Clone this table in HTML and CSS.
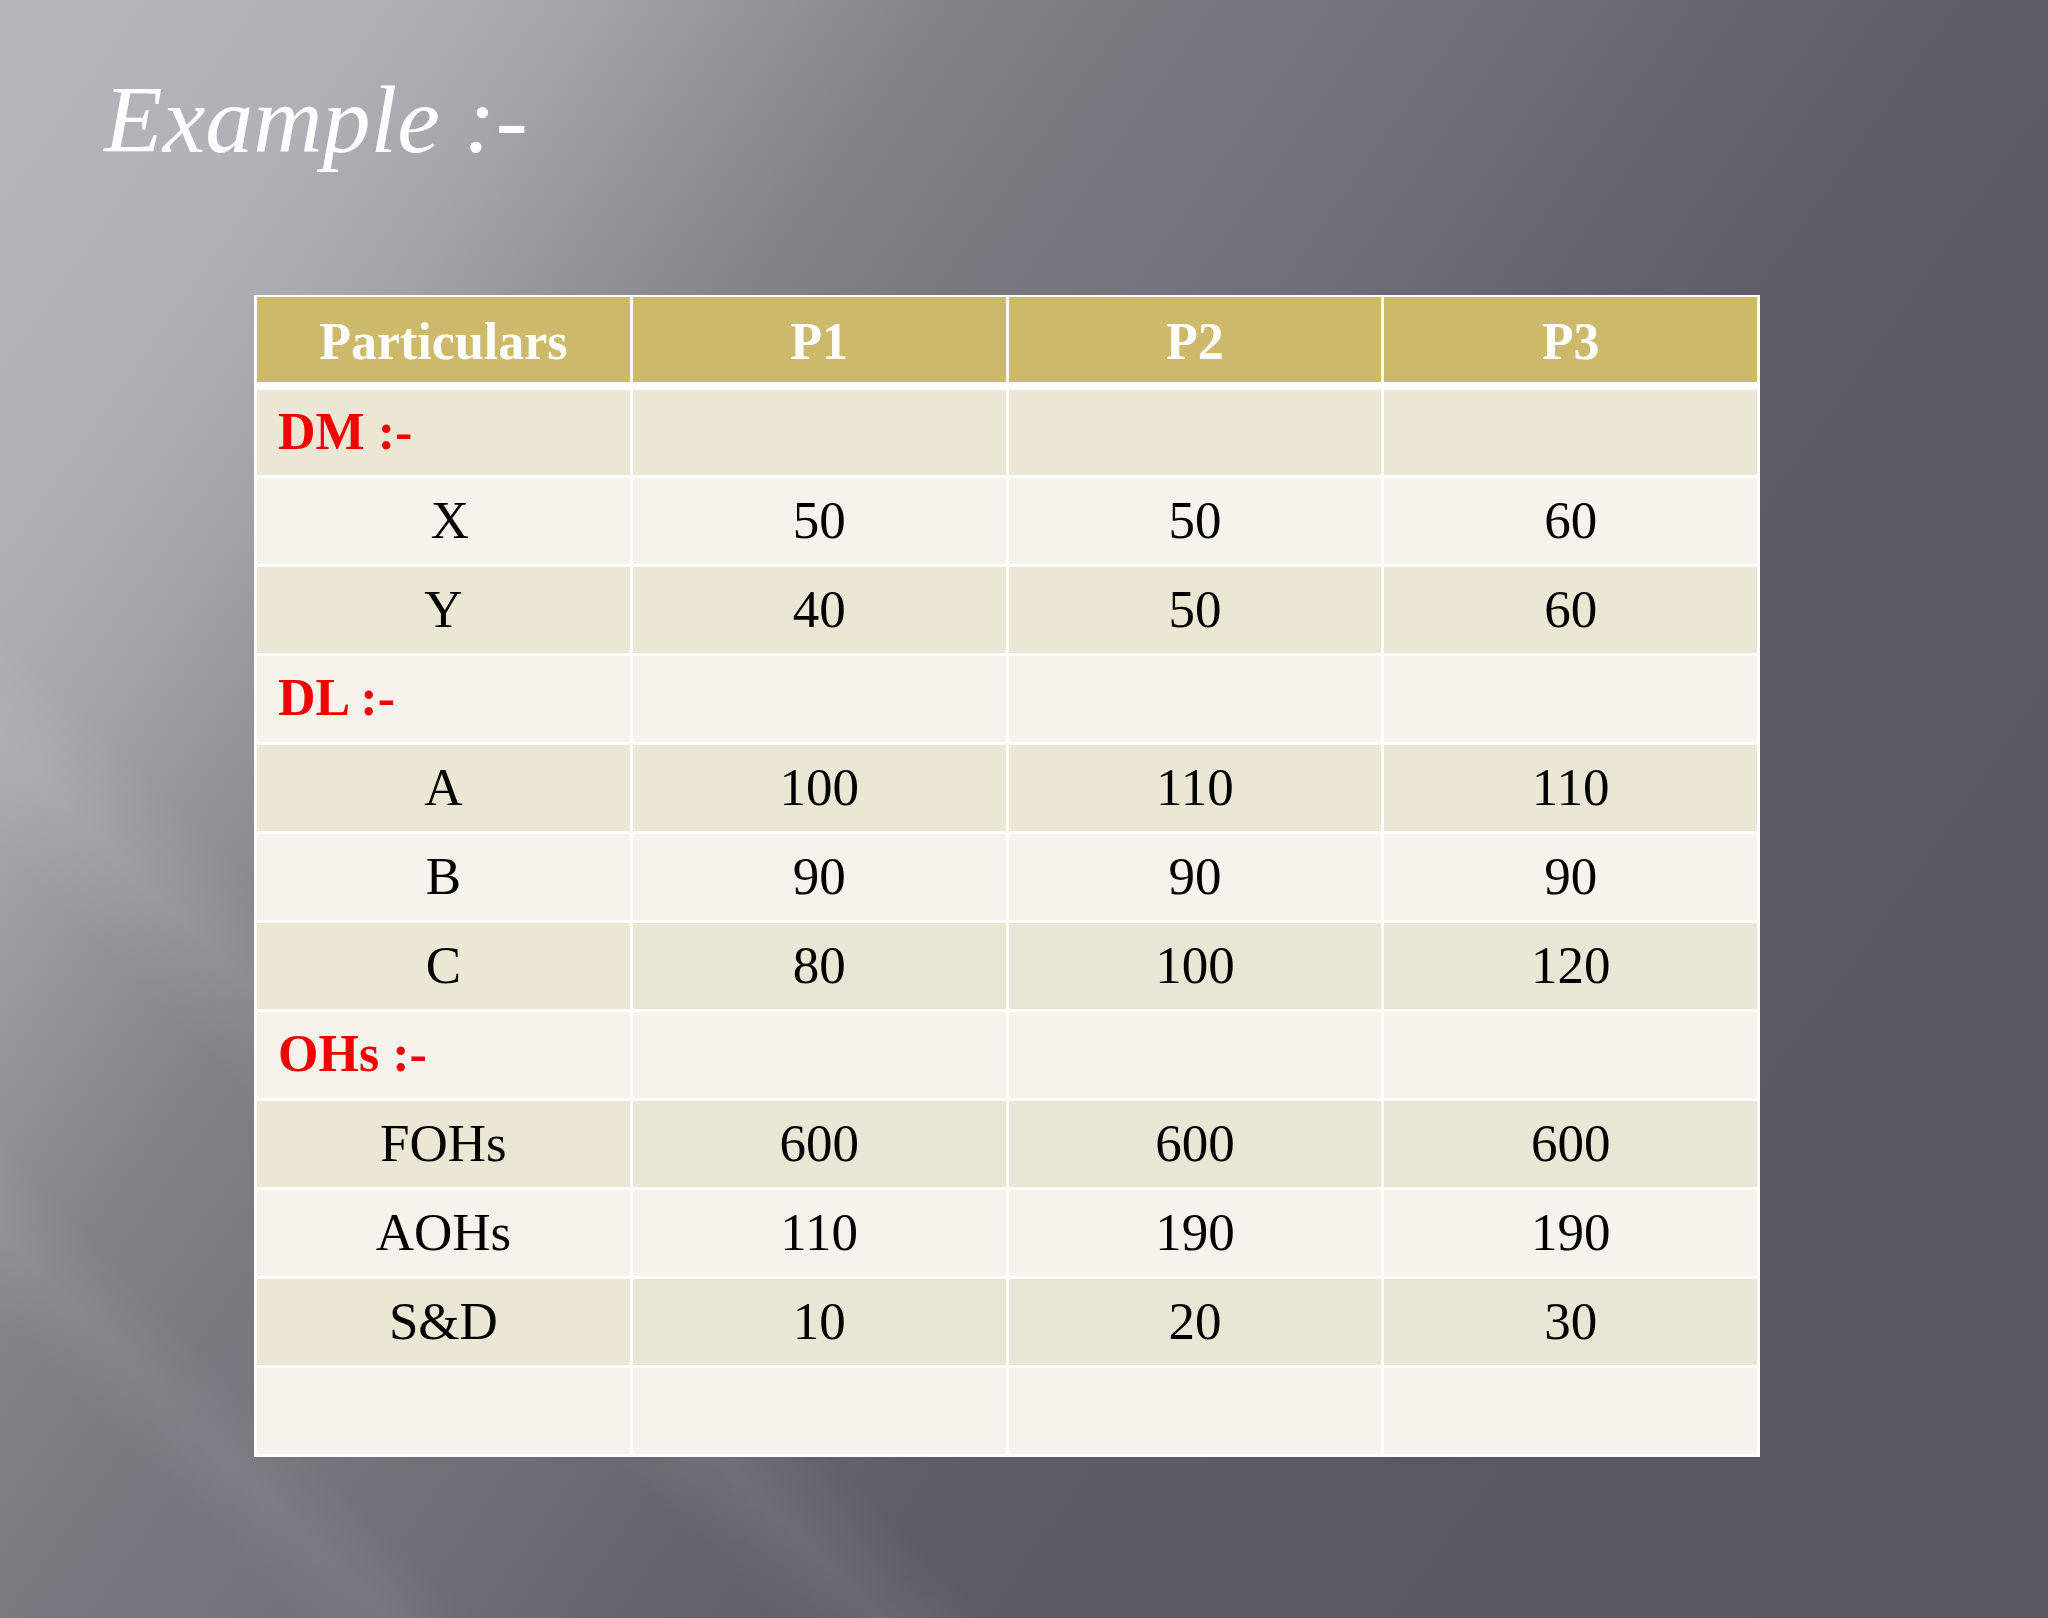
FILE: index.html
```html
<!DOCTYPE html>
<html>
<head>
<meta charset="utf-8">
<link rel="stylesheet" href="styles.css">
</head>
<body>
<div class="slide">
  <h1 class="title">Example :-</h1>
  <div class="table">
    <div class="row head">
      <div class="cell">Particulars</div><div class="cell">P1</div><div class="cell">P2</div><div class="cell">P3</div>
    </div>
    <div class="row first dark">
      <div class="cell sec">DM :-</div><div class="cell"></div><div class="cell"></div><div class="cell"></div>
    </div>
    <div class="row light">
      <div class="cell">&nbsp;X</div><div class="cell">50</div><div class="cell">50</div><div class="cell">60</div>
    </div>
    <div class="row dark">
      <div class="cell">Y</div><div class="cell">40</div><div class="cell">50</div><div class="cell">60</div>
    </div>
    <div class="row light">
      <div class="cell sec">DL :-</div><div class="cell"></div><div class="cell"></div><div class="cell"></div>
    </div>
    <div class="row dark">
      <div class="cell">A</div><div class="cell">100</div><div class="cell">110</div><div class="cell">110</div>
    </div>
    <div class="row light">
      <div class="cell">B</div><div class="cell">90</div><div class="cell">90</div><div class="cell">90</div>
    </div>
    <div class="row dark green">
      <div class="cell">C</div><div class="cell">80</div><div class="cell">100</div><div class="cell">120</div>
    </div>
    <div class="row light">
      <div class="cell sec">OHs :-</div><div class="cell"></div><div class="cell"></div><div class="cell"></div>
    </div>
    <div class="row dark green">
      <div class="cell">FOHs</div><div class="cell">600</div><div class="cell">600</div><div class="cell">600</div>
    </div>
    <div class="row light">
      <div class="cell">AOHs</div><div class="cell">110</div><div class="cell">190</div><div class="cell">190</div>
    </div>
    <div class="row dark green">
      <div class="cell">S&amp;D</div><div class="cell">10</div><div class="cell">20</div><div class="cell">30</div>
    </div>
    <div class="row light">
      <div class="cell"></div><div class="cell"></div><div class="cell"></div><div class="cell"></div>
    </div>
  </div>
</div>
</body>
</html>
```

FILE: styles.css
```css
html, body {
  margin: 0;
  padding: 0;
}

.slide {
  width: 2048px;
  height: 1618px;
  overflow: hidden;
  font-family: "Liberation Serif", "Times New Roman", serif;
  background:
    linear-gradient(45deg,
      rgba(255,255,255,0) 8%,
      rgba(255,255,255,0.06) 10.5%,
      rgba(255,255,255,0) 13%,
      rgba(255,255,255,0) 21%,
      rgba(255,255,255,0.07) 24%,
      rgba(255,255,255,0) 27%),
    linear-gradient(125deg,
      #b5b5bc 0%,
      #b0b0b7 12%,
      #a5a5ac 18%,
      #949399 24%,
      #838289 30%,
      #7a7980 36%,
      #716f77 47%,
      #66646d 55%,
      #5f5c66 63%,
      #5b5861 80%,
      #5a5760 100%);
}

.title {
  margin: 0;
  padding: 62px 0 0 104px;
  font-size: 96px;
  line-height: 115px;
  font-style: italic;
  font-weight: normal;
  color: #ffffff;
}

.table {
  margin: 118px 0 0 254px;
  width: 1506px;
  box-sizing: border-box;
  padding: 2px 3px 3px 3px;
  background: #ffffff;
  display: flex;
  flex-direction: column;
  gap: 3px;
}

.row {
  display: grid;
  grid-template-columns: repeat(4, 1fr);
  column-gap: 3px;
  height: 86px;
}

.row.head {
  height: 85px;
  margin-bottom: 5px;
}

.row.first {
  height: 85px;
}

.cell {
  display: flex;
  align-items: center;
  justify-content: center;
  box-sizing: border-box;
  padding-bottom: 3px;
  font-size: 53px;
  color: #000000;
}

.head .cell {
  background: #cdb96a;
  color: #ffffff;
  font-weight: bold;
  font-size: 52px;
  padding-bottom: 0;
  padding-top: 3px;
}

.dark .cell {
  background: #ece6d5;
}

.green .cell + .cell {
  background: #e9e6d5;
}

.light .cell {
  background: #f5f3ec;
}

.cell.sec {
  justify-content: flex-start;
  padding-left: 21px;
  color: #f20000;
  font-weight: bold;
  font-size: 52px;
}
```
